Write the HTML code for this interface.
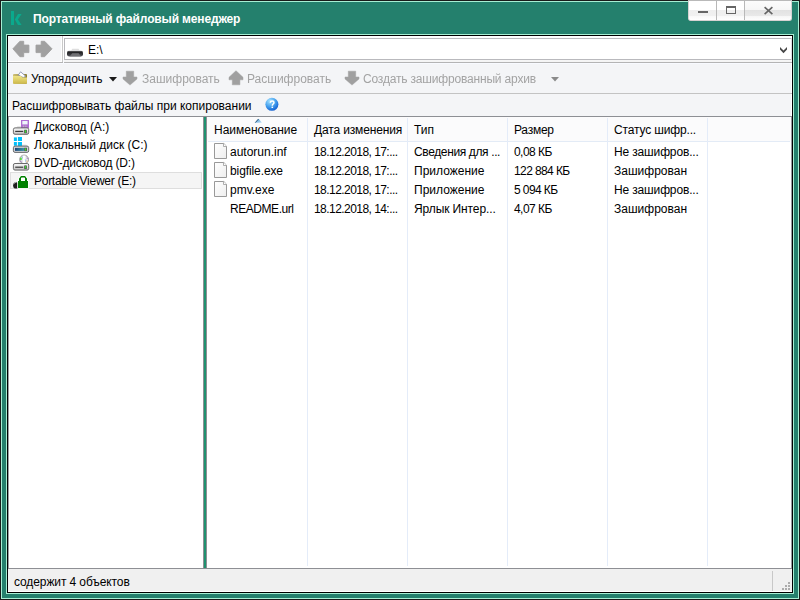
<!DOCTYPE html>
<html><head><meta charset="utf-8">
<style>
*{margin:0;padding:0;box-sizing:border-box}
html,body{width:800px;height:600px;overflow:hidden;background:#24806d}
body{position:relative;font-family:"Liberation Sans",sans-serif;font-size:12px;color:#000}
.a{position:absolute}
.t{position:absolute;white-space:nowrap;line-height:14px}
</style></head><body>
<!-- outer frame -->
<div class="a" style="left:0;top:0;width:800px;height:600px;border:1px solid #1a1a1a"></div>
<div class="a" style="left:1px;top:1px;width:798px;height:598px;border:1px solid #a6efd4"></div>
<div class="a" style="left:6px;top:34px;width:788px;height:560px;border:1px solid #a6efd4"></div>
<div class="a" style="left:7px;top:35px;width:786px;height:558px;border:1px solid #000"></div>

<!-- title -->
<svg class="a" style="left:0;top:0" width="30" height="30" viewBox="0 0 30 30"><path d="M11 11H14V25H11Z M18 14H21.6L17.9 19.5L21.6 25H18L14.8 19.5Z" fill="#0aa98d"/></svg>
<div class="t" style="left:33px;top:12px;color:#fff;font-weight:bold;letter-spacing:-0.15px">Портативный файловый менеджер</div>

<!-- window buttons -->
<div class="a" style="left:688px;top:0;width:104px;height:21px;border:1px solid #d6d2d2;border-top-color:#b9b9b9;border-radius:0 0 3px 3px;overflow:hidden;background:#fff">
  <div class="a" style="left:0;top:0;width:27px;height:19px;background:linear-gradient(#fff 0,#fff 9px,#efefef 9px,#f1f1f1 15px,#f9f9f9 15px,#fff 19px)"></div>
  <div class="a" style="left:28px;top:0;width:27px;height:19px;background:linear-gradient(#fff 0,#fff 9px,#efefef 9px,#f1f1f1 15px,#f9f9f9 15px,#fff 19px)"></div>
  <div class="a" style="left:56px;top:0;width:46px;height:19px;background:linear-gradient(#fcfcfc 0,#f6f6f6 9px,#e2e2e2 9px,#e9e9e9 15px,#f6f6f6 15px,#fdfdfd 19px)"></div>
  <div class="a" style="left:27px;top:0;width:1px;height:20px;background:#b8b8b8"></div>
  <div class="a" style="left:55px;top:0;width:1px;height:20px;background:#b8b8b8"></div>
</div>
<div class="a" style="left:698px;top:11px;width:10px;height:2px;background:#666"></div>
<div class="a" style="left:726px;top:6px;width:10px;height:8px;border:1px solid #666;border-top-width:2px"></div>
<svg class="a" style="left:760px;top:0" width="20" height="20" viewBox="760 0 20 20"><path d="M764.6 7.2L772.4 14.2M772.4 7.2L764.6 14.2" stroke="#646464" stroke-width="1.6"/></svg>

<!-- content background -->
<div class="a" style="left:8px;top:36px;width:784px;height:556px;background:#f4f5f7"></div>

<!-- nav bar -->
<div class="a" style="left:62px;top:36px;width:1px;height:26px;background:#c9c9c9"></div>
<div class="a" style="left:63px;top:36px;width:729px;height:26px;background:#f5f5f5"></div><div class="a" style="left:63px;top:36px;width:729px;height:24px;background:#fff"></div><div class="a" style="left:61px;top:36px;width:1px;height:26px;background:#fff"></div><div class="a" style="left:8px;top:61px;width:54px;height:1px;background:#fff"></div>
<div class="a" style="left:64px;top:38px;width:728px;height:22px;border:1px solid #b9b9bd;border-right:none"></div>
<div class="a" style="left:8px;top:62px;width:784px;height:1px;background:#b4b4b4"></div><div class="a" style="left:63px;top:60px;width:1px;height:3px;background:#fafcff"></div><div class="a" style="left:8px;top:63px;width:784px;height:1px;background:#f8faff"></div>
<!-- back / fwd arrows -->
<svg class="a" style="left:0;top:30px" width="60" height="32" viewBox="0 30 60 32"><path d="M12.9 48.8L19.9 41.3H23.7V45.1H28.9V52.6H23.7V56.7H19.9Z" fill="#a0a0a0" stroke="#a0a0a0" stroke-width="0.9" stroke-linejoin="round"/><path d="M52 48.8L44.6 41.3H41.2V45.1H36V52.6H41.2V56.7H44.6Z" fill="#a0a0a0" stroke="#a0a0a0" stroke-width="0.9" stroke-linejoin="round"/></svg>

<!-- drive icon -->
<svg class="a" style="left:64px;top:44px" width="24" height="16" viewBox="64 44 24 16"><defs><linearGradient id="dg" x1="0" y1="0" x2="0" y2="1"><stop offset="0" stop-color="#d0d0d4"/><stop offset="0.2" stop-color="#1c1c1e"/><stop offset="1" stop-color="#55555c"/></linearGradient></defs><path d="M71 50.8L72.3 48.8H78.5L79.8 50.8Z" fill="#dedede"/><rect x="67" y="50.6" width="16" height="6" rx="2.3" fill="url(#dg)"/><path d="M69.8 56.3L72.2 53.3H78.6L81 56.3Z" fill="#707074"/></svg>
<div class="t" style="left:88px;top:43px">E:\</div>
<svg class="a" style="left:776px;top:44px" width="14" height="12" viewBox="776 44 14 12"><path d="M780 47L783.5 50.6L787 47V49.6L783.5 53.2L780 49.6Z" fill="#474747"/></svg><div class="a" style="left:791px;top:38px;width:1px;height:22px;background:#dcdce2"></div><div class="a" style="left:791px;top:63px;width:1px;height:53px;background:#fff"></div>

<!-- toolbar -->
<div class="a" style="left:8px;top:93px;width:784px;height:1px;background:#c3c3c3"></div>
<div class="a" style="left:8px;top:116px;width:784px;height:1px;background:#8d8f94"></div>

<svg class="a" style="left:10px;top:68px" width="20" height="20" viewBox="10 68 20 20"><defs><linearGradient id="fg" x1="0" y1="0" x2="0" y2="1"><stop offset="0" stop-color="#efe486"/><stop offset="1" stop-color="#cdb94a"/></linearGradient><linearGradient id="fb" x1="0" y1="0" x2="1" y2="0"><stop offset="0" stop-color="#cfc27a"/><stop offset="1" stop-color="#8c7c2c"/></linearGradient></defs><rect x="13" y="74" width="14" height="9.7" rx="1" fill="url(#fb)"/><path d="M18.3 75L20.6 71.8L25.8 76.3L23.2 77.5Z" fill="#fff" stroke="#7f8aa8" stroke-width="0.8"/><path d="M13 76H21.2L22.2 77.6H27V82.7Q27 83.7 26 83.7H14Q13 83.7 13 82.7Z" fill="url(#fg)"/></svg>
<div class="t" style="left:31px;top:72px">Упорядочить</div>
<svg class="a" style="left:109px;top:77px" width="8" height="5" viewBox="0 0 8 5"><path d="M0 0H8L4 4.5Z" fill="#1a1a1a"/></svg>

<svg class="a" style="left:120px;top:68px" width="20" height="20" viewBox="120 68 20 20"><path d="M126.3 71.2H133.7V77H137V78.9L130.3 84.8H129.7L123 78.9V77H126.3Z" fill="#a0a0a0" stroke="#a0a0a0" stroke-width="0.5" stroke-linejoin="round"/></svg>
<div class="t" style="left:142px;top:72px;color:#a3a3a3;will-change:transform">Зашифровать</div>
<svg class="a" style="left:226px;top:68px" width="20" height="20" viewBox="120 68 20 20"><path d="M126.3 84.8H133.9V79.8H137V77.3L130.3 71H129.7L123 77.3V79.8H126.3Z" fill="#a0a0a0" stroke="#a0a0a0" stroke-width="0.5" stroke-linejoin="round"/></svg>
<div class="t" style="left:247px;top:72px;color:#a3a3a3;will-change:transform">Расшифровать</div>
<svg class="a" style="left:342px;top:68px" width="20" height="20" viewBox="120 68 20 20"><path d="M126.3 71.2H133.7V77H137V78.9L130.3 84.8H129.7L123 78.9V77H126.3Z" fill="#a0a0a0" stroke="#a0a0a0" stroke-width="0.5" stroke-linejoin="round"/></svg>
<div class="t" style="left:363px;top:72px;color:#a3a3a3;will-change:transform;letter-spacing:-0.18px">Создать зашифрованный архив</div>
<svg class="a" style="left:551px;top:77px" width="8" height="5" viewBox="0 0 8 5"><path d="M0 0H8L4 4.5Z" fill="#8a8a8a"/></svg>

<div class="t" style="left:12px;top:99px">Расшифровывать файлы при копировании</div>
<svg class="a" style="left:262px;top:94px" width="20" height="20" viewBox="262 94 20 20"><defs><radialGradient id="hg" cx="0.35" cy="0.25" r="0.85"><stop offset="0" stop-color="#a6e2ff"/><stop offset="0.5" stop-color="#47a2ee"/><stop offset="0.85" stop-color="#1b6bd8"/><stop offset="1" stop-color="#0d52c2"/></radialGradient></defs><circle cx="271.9" cy="104.3" r="6.5" fill="url(#hg)"/><path d="M270.3 102.7Q270.4 101.1 272.2 101.1Q274 101.1 274 102.6Q274 103.6 273 104.2Q272.3 104.7 272.3 105.8" fill="none" stroke="#fff" stroke-width="1.5"/><rect x="271.5" y="106.6" width="1.6" height="1.4" fill="#fff"/></svg>

<!-- tree panel -->
<div class="a" style="left:8px;top:117px;width:195px;height:451px;background:#fff;border-left:1px solid #9c9da1"></div>
<div class="a" style="left:10px;top:172px;width:192px;height:17px;background:#f5f5f5;border:1px solid #dedede"></div>

<svg class="a" style="left:8px;top:117px" width="24" height="76" viewBox="8 117 24 76">
<defs>
<linearGradient id="db" x1="0" y1="0" x2="0" y2="1"><stop offset="0" stop-color="#fafafa"/><stop offset="0.5" stop-color="#e2e2e2"/><stop offset="1" stop-color="#bdbdbd"/></linearGradient>
<linearGradient id="cb" x1="0" y1="0" x2="1" y2="0"><stop offset="0" stop-color="#1d4679"/><stop offset="1" stop-color="#3c98a8"/></linearGradient>
<radialGradient id="cd" cx="0.5" cy="0.5" r="0.5"><stop offset="0" stop-color="#fff"/><stop offset="0.25" stop-color="#fff"/><stop offset="0.5" stop-color="#c8d8e8"/><stop offset="0.75" stop-color="#d8c8e0"/><stop offset="1" stop-color="#909090"/></radialGradient>
</defs>
<!-- floppy -->
<rect x="21" y="120" width="8" height="8" fill="#b06fd2"/>
<rect x="22.3" y="121" width="5.3" height="3.4" fill="#eef6fa"/>
<rect x="23" y="125.6" width="1.2" height="1.6" fill="#bbb"/><rect x="25.3" y="125.6" width="1.2" height="1.6" fill="#bbb"/>
<path d="M16 128L17.5 126H21V128Z" fill="#e4e4e4"/>
<rect x="13.4" y="127.9" width="15.3" height="6.4" rx="1.6" fill="url(#db)" stroke="#5c5c5c" stroke-width="0.9"/>
<rect x="15.2" y="130.8" width="8" height="1.2" fill="#3a3a3a"/>
<rect x="24.3" y="129.8" width="2.4" height="3.4" fill="#333"/><rect x="24.9" y="130.2" width="1.2" height="2.6" fill="#37e02e"/>
<!-- C: -->
<rect x="13.9" y="137.4" width="3" height="3.6" fill="#00c0fb"/><rect x="17.9" y="137" width="4.1" height="4" fill="#00c0fb"/>
<rect x="13.9" y="142" width="3" height="3.7" fill="#00c0fb"/><rect x="17.9" y="142" width="4.1" height="3.9" fill="#00c0fb"/>
<path d="M22 146V144.5H26L27.5 146Z" fill="#e8e8e8"/>
<rect x="13.4" y="146.1" width="15.3" height="6.3" rx="1.6" fill="#cfd2d6" stroke="#5a5c60" stroke-width="0.9"/>
<rect x="15" y="147.9" width="9.4" height="3" fill="url(#cb)"/>
<rect x="24.4" y="147.8" width="2.4" height="3.3" fill="#333"/><rect x="25" y="148.2" width="1.2" height="2.6" fill="#3ee02c"/>
<!-- DVD -->
<path d="M16 164L17.5 162.5H20V164Z" fill="#e4e4e4"/>
<circle cx="24.1" cy="159.5" r="4.4" fill="#e2e2e8" stroke="#8e8e8e" stroke-width="0.9"/>
<path d="M22.6 155.4H25.6L25.2 163.6H23Z" fill="#fff"/>
<ellipse cx="20.9" cy="158.9" rx="1" ry="1.3" fill="#58e040"/>
<path d="M20 160.5L22 161.8L21.4 162.6L19.8 161.5Z" fill="#a070c0" opacity="0.7"/>
<path d="M26.8 157.5L28.4 158.3L28.3 159.3L26.6 158.6Z" fill="#a070c0" opacity="0.7"/>
<path d="M26.3 160.2L28 161.4L27.3 162.3L26 161Z" fill="#f0c080"/>
<path d="M25.2 159L25.8 161.5L25.2 161.7L24.8 159.2Z" fill="#70b0e0"/>
<path d="M22 157L22.6 156L23 158.5L22.4 158.7Z" fill="#70b0e0" opacity="0.8"/>
<rect x="13.4" y="163.5" width="15.3" height="6.6" rx="1.6" fill="url(#db)" stroke="#5c5c5c" stroke-width="0.9"/>
<rect x="15.2" y="166.6" width="8" height="1.2" fill="#3a3a3a"/>
<rect x="24.3" y="165.5" width="2.4" height="3.4" fill="#333"/><rect x="24.9" y="165.9" width="1.2" height="2.6" fill="#37e02e"/>
<!-- lock -->
<circle cx="16.3" cy="185.4" r="3.2" fill="#1e1e1e"/>
<path d="M13.6 184.2Q14.3 182.4 16.3 182.2" stroke="#b0b0b0" stroke-width="0.9" fill="none"/>
<path d="M17.2 188.8V180.3H18.3V178.3L19.3 177.3V176.8L20.6 175.2H25.4L26.7 176.8V177.3L27.7 178.3V180.3H28.8V188.8Z" fill="#fff"/>
<path d="M18 188V181H19V178.6L20 177.6V177.2L21 176H25L26 177.2V177.6L27 178.6V181H28V188Z" fill="#008000"/>
<path d="M21 181V178L21.6 177.4H24.4L25 178V181Z" fill="#fff"/>
</svg>
<div class="t" style="left:34px;top:120px">Дисковод (A:)</div>
<div class="t" style="left:34px;top:138px">Локальный диск (C:)</div>
<div class="t" style="left:34px;top:156px;letter-spacing:-0.2px">DVD-дисковод (D:)</div>
<div class="t" style="left:34px;top:174px;letter-spacing:-0.27px">Portable Viewer (E:)</div>

<!-- splitter -->
<div class="a" style="left:203px;top:117px;width:4px;height:451px;background:#20916f;border-left:1px solid #8e8f94;border-right:1px solid #8e8f94"></div>

<!-- list -->
<div class="a" style="left:207px;top:117px;width:584px;height:451px;background:#fff"></div>
<div class="a" style="left:207px;top:117px;width:584px;height:24px;background:#fbfbfc"></div>
<div class="a" style="left:208px;top:141px;width:582px;height:1px;background:#e3ebf6"></div>
<div class="a" style="left:791px;top:117px;width:1px;height:452px;background:#9a9ba0"></div>
<div class="a" style="left:8px;top:568px;width:784px;height:1px;background:#8e8f94"></div>
<div class="a" style="left:307px;top:118px;width:1px;height:448px;background:#e4ecf9"></div>
<div class="a" style="left:407px;top:118px;width:1px;height:448px;background:#e4ecf9"></div>
<div class="a" style="left:507px;top:118px;width:1px;height:448px;background:#e4ecf9"></div>
<div class="a" style="left:607px;top:118px;width:1px;height:448px;background:#e4ecf9"></div>
<div class="a" style="left:707px;top:118px;width:1px;height:448px;background:#e4ecf9"></div>

<svg class="a" style="left:250px;top:114px" width="16" height="12" viewBox="250 114 16 12"><defs><linearGradient id="sg" x1="0" y1="0" x2="1" y2="1"><stop offset="0" stop-color="#3f8fcc"/><stop offset="1" stop-color="#c8e6fa"/></linearGradient></defs><path d="M255 122.8L258.5 118.8L262 122.8Z" fill="url(#sg)"/><path d="M255.3 122.6L258.5 119" stroke="#2d5878" stroke-width="1"/></svg>
<div class="t" style="left:214px;top:123px">Наименование</div>
<div class="t" style="left:314px;top:123px;letter-spacing:-0.15px">Дата изменения</div>
<div class="t" style="left:414px;top:123px">Тип</div>
<div class="t" style="left:514px;top:123px;letter-spacing:-0.25px">Размер</div>
<div class="t" style="left:614px;top:123px;letter-spacing:-0.15px">Статус шифр...</div>

<!-- rows -->
<svg class="a" style="left:212px;top:142px" width="18" height="60" viewBox="212 142 18 60">
<defs><linearGradient id="pg" x1="0" y1="0" x2="1" y2="1"><stop offset="0" stop-color="#ffffff"/><stop offset="1" stop-color="#eeeeee"/></linearGradient></defs>
<path id="pp" d="M214.5 143.5H223.8L226.5 146.2V158.5H214.5Z" fill="url(#pg)" stroke="#939393" stroke-width="0.95"/>
<path d="M223.5 143.5V146.5H226.5" fill="#fff" stroke="#9a9a9a" stroke-width="0.8"/>
<path d="M214.5 162.5H223.8L226.5 165.2V177.5H214.5Z" fill="url(#pg)" stroke="#939393" stroke-width="0.95"/>
<path d="M223.5 162.5V165.5H226.5" fill="#fff" stroke="#9a9a9a" stroke-width="0.8"/>
<path d="M214.5 181.5H223.8L226.5 184.2V196.5H214.5Z" fill="url(#pg)" stroke="#939393" stroke-width="0.95"/>
<path d="M223.5 181.5V184.5H226.5" fill="#fff" stroke="#9a9a9a" stroke-width="0.8"/>
</svg>

<div class="t" style="left:230px;top:145px">autorun.inf</div>
<div class="t" style="left:314px;top:145px;letter-spacing:-0.55px">18.12.2018, 17:...</div>
<div class="t" style="left:414px;top:145px;letter-spacing:-0.37px">Сведения для ...</div>
<div class="t" style="left:514px;top:145px;letter-spacing:-0.55px">0,08 КБ</div>
<div class="t" style="left:614px;top:145px;letter-spacing:-0.15px">Не зашифров...</div>

<div class="t" style="left:230px;top:164px;letter-spacing:-0.1px">bigfile.exe</div>
<div class="t" style="left:314px;top:164px;letter-spacing:-0.55px">18.12.2018, 17:...</div>
<div class="t" style="left:414px;top:164px">Приложение</div>
<div class="t" style="left:514px;top:164px;letter-spacing:-0.6px">122 884 КБ</div>
<div class="t" style="left:614px;top:164px">Зашифрован</div>

<div class="t" style="left:230px;top:183px">pmv.exe</div>
<div class="t" style="left:314px;top:183px;letter-spacing:-0.55px">18.12.2018, 17:...</div>
<div class="t" style="left:414px;top:183px">Приложение</div>
<div class="t" style="left:514px;top:183px;letter-spacing:-0.6px">5 094 КБ</div>
<div class="t" style="left:614px;top:183px;letter-spacing:-0.15px">Не зашифров...</div>

<div class="t" style="left:230px;top:202px;letter-spacing:-0.45px">README.url</div>
<div class="t" style="left:314px;top:202px;letter-spacing:-0.55px">18.12.2018, 14:...</div>
<div class="t" style="left:414px;top:202px;letter-spacing:-0.1px">Ярлык Интер...</div>
<div class="t" style="left:514px;top:202px;letter-spacing:-0.55px">4,07 КБ</div>
<div class="t" style="left:614px;top:202px">Зашифрован</div>

<!-- status bar -->
<div class="a" style="left:8px;top:569px;width:784px;height:23px;background:#f0f0f0"></div>
<div class="a" style="left:8px;top:591px;width:784px;height:1px;background:#fff"></div>
<div class="t" style="left:14px;top:575px;letter-spacing:-0.1px">содержит 4 объектов</div>
<div class="a" style="left:772px;top:571px;width:1px;height:20px;background:#c8c8c8"></div>
<div class="a" style="left:788px;top:582px;width:2px;height:2px;background:#acacac"></div><div class="a" style="left:785px;top:585px;width:2px;height:2px;background:#acacac"></div><div class="a" style="left:788px;top:585px;width:2px;height:2px;background:#acacac"></div><div class="a" style="left:782px;top:588px;width:2px;height:2px;background:#acacac"></div><div class="a" style="left:785px;top:588px;width:2px;height:2px;background:#acacac"></div><div class="a" style="left:788px;top:588px;width:2px;height:2px;background:#acacac"></div>
</body></html>
